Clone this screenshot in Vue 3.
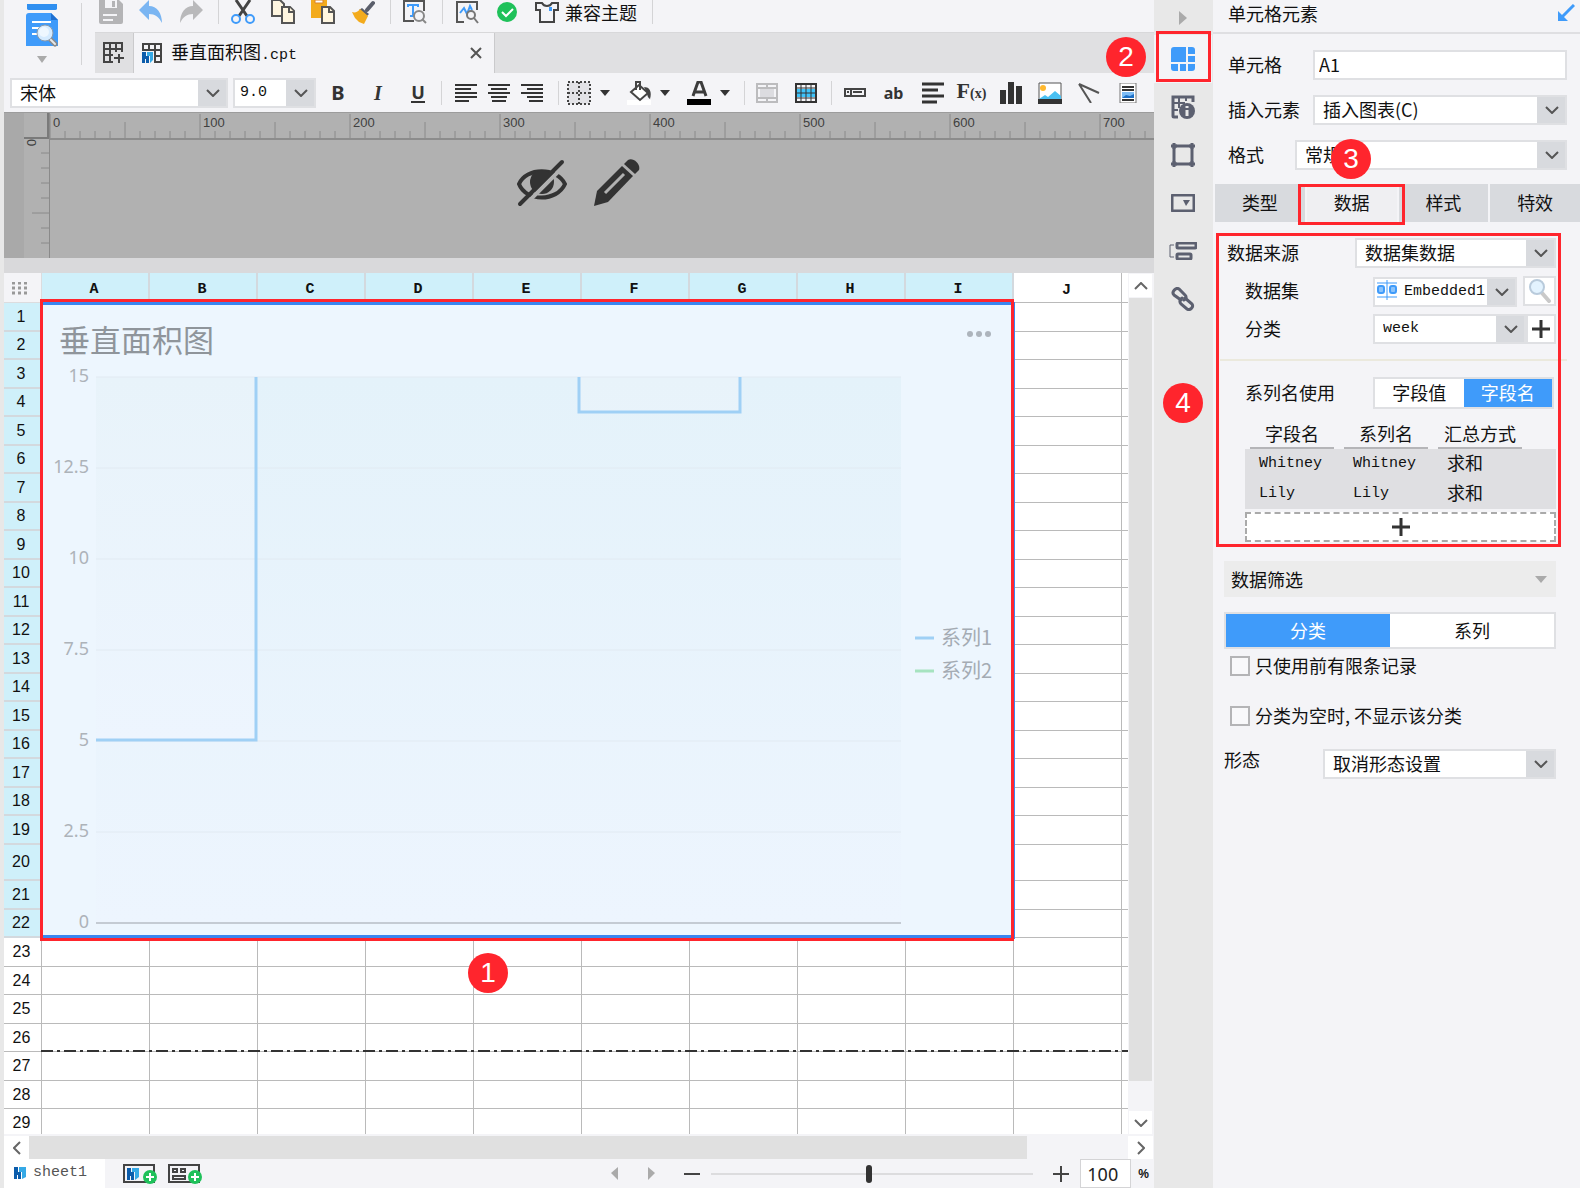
<script setup>
import { ref } from 'vue'

const fontName = ref('宋体')
const fontSize = ref('9.0')
const cellName = ref('A1')
const zoomLevel = ref(49)
const zoomPercent = ref('100')
const limitRecords = ref(false)
const hideEmpty = ref(false)

const columns = ['A', 'B', 'C', 'D', 'E', 'F', 'G', 'H', 'I', 'J']
const rows = Array.from({ length: 29 }, (_, i) => i + 1)

const horizontalTicks = Array.from({ length: 74 }, (_, i) => ({
  x: i * 15,
  top: i % 10 === 0 ? 1 : i % 5 === 0 ? 9 : 18,
  label: i % 10 === 0 ? String(i * 10) : ''
}))
const verticalTicks = [1, 2, 3, 4, 5, 6, 7].map(i => ({ y: i * 15, left: i % 5 === 0 ? 8 : 17 }))

const axis = ['15', '12.5', '10', '7.5', '5', '2.5', '0'].map((label, i) => ({ label, y: 75 + i * 91 }))

const propertyTabs = ['类型', '数据', '样式', '特效']
const series = [
  { field: 'Whitney', name: 'Whitney', method: '求和' },
  { field: 'Lily', name: 'Lily', method: '求和' }
]
</script>

<template>
  <div class="app">
    <main class="editor">
      <header class="top">
        <button class="preview" aria-label="预览">
          <svg width="32" height="44" viewBox="0 0 32 44">
            <path d="M1 0h30v5a2 2 0 0 1-2 1H3a2 2 0 0 1-2-1z" fill="#2f8ff0" />
            <path d="M3 9h22l7 7v26H0V12a3 3 0 0 1 3-3z" fill="#3f9bfa" />
            <path d="M25 9l7 7h-7z" fill="#1f6fd0" />
            <path d="M6 18h19M6 24h10M6 30h6" stroke="#fff" stroke-width="2" />
            <path d="M23 34l6 6" stroke="#8a8a8a" stroke-width="5" stroke-linecap="round" />
            <path d="M23 34l6 6" stroke="#e8e8e8" stroke-width="2" stroke-linecap="round" />
            <circle cx="19" cy="29" r="8" fill="#d5ebff" stroke="#8d9aa8" stroke-width="1" />
            <circle cx="18" cy="28" r="5" fill="#eef7ff" />
          </svg>
          <svg width="10" height="7" viewBox="0 0 10 7"><path d="M0 0h10L5 7z" fill="#aaa" /></svg>
        </button>

        <div class="top-right">
          <div class="toolbar">
            <button aria-label="保存">
              <svg viewBox="0 0 24 24"><path d="M0 0h20l4 4v18a2 2 0 0 1-2 2H2a2 2 0 0 1-2-2z" fill="#b4b4b6" /><path d="M6 0h12v8H6z" fill="#f4f4f7" /><path d="M13 1h3v6h-3z" fill="#b4b4b6" /><path d="M4 15h14M4 20h10" stroke="#f4f4f7" stroke-width="2" /></svg>
            </button>
            <button aria-label="撤销">
              <svg viewBox="0 0 24 24"><path d="M10 0v6c8 0 13 7 13 17-3-6-7-9-13-9v6L0 10z" fill="#7ab5f2" /></svg>
            </button>
            <button aria-label="重做">
              <svg viewBox="0 0 24 24"><path d="M14 0v6C6 6 1 13 1 23c3-6 7-9 13-9v6l10-10z" fill="#b9b9bb" /></svg>
            </button>
            <i class="sep"></i>
            <button aria-label="剪切">
              <svg viewBox="0 0 24 24" fill="none"><path d="M5 0l11 16M19 0L8 16" stroke="#444" stroke-width="3" /><circle cx="5" cy="19" r="4" stroke="#3f9bfa" stroke-width="2" /><circle cx="19" cy="19" r="4" stroke="#3f9bfa" stroke-width="2" /></svg>
            </button>
            <button aria-label="复制">
              <svg viewBox="0 0 24 24" fill="#fff6e0" stroke="#555" stroke-width="2"><path d="M1 0h8l4 4v12H1z" /><path d="M11 7h8l4 4v12H11z" /><path d="M18 7v5h5" /></svg>
            </button>
            <button aria-label="粘贴">
              <svg viewBox="0 0 24 24"><path d="M0 0h16v18H0z" fill="#f3ab1d" /><path d="M4 0h8v3H4z" fill="#fff" stroke="#d9822b" /><path d="M11 7h8l4 4v12H11z" fill="#fff6e0" stroke="#555" stroke-width="2" /><path d="M18 7v5h5" fill="none" stroke="#555" stroke-width="2" /></svg>
            </button>
            <button aria-label="格式刷">
              <svg viewBox="0 0 24 24"><path d="M22 3l-6 7" stroke="#5a5e6b" stroke-width="4" stroke-linecap="round" /><path d="M11 8l7 6-2 2-8-6z" fill="#5a5e6b" /><path d="M9 9l8 7-4 8-5-2-4-4-3-6c3 1 6 0 8-3z" fill="#f3ab1d" /></svg>
            </button>
            <i class="sep"></i>
            <button aria-label="文字查找">
              <svg viewBox="0 0 24 24" fill="none" stroke="#555" stroke-width="2"><path d="M11 21H1V1h20v10" /><path d="M5 7V5h10v2M10 5v11M7 16h6" stroke="#3f9bfa" /><circle cx="16" cy="16" r="5" fill="#f4f4f7" stroke="#888" /><path d="M19 19l4 4" stroke="#888" /></svg>
            </button>
            <i class="sep"></i>
            <button aria-label="图表检查">
              <svg viewBox="0 0 24 24" fill="none" stroke="#555" stroke-width="2"><path d="M9 22H2V2h20v8" /><path d="M5 13l4-5 3 6 3-8 2 4" stroke="#3f9bfa" /><circle cx="16" cy="15" r="4" fill="#f4f4f7" stroke="#777" /><path d="M19 18l4 5" stroke="#777" /></svg>
            </button>
            <button aria-label="校验">
              <svg viewBox="0 0 24 24"><circle cx="12" cy="12" r="10" fill="#1fc15a" /><path d="M7 12l4 4 7-7" fill="none" stroke="#fff" stroke-width="2" /></svg>
            </button>
            <button class="theme">
              <svg viewBox="0 0 24 24" fill="none"><path d="M1 3h6c2 4 8 4 10 0h6v7h-4v12H5V10H1z" stroke="#444" stroke-width="2" /><path d="M14 7h3v4h-3z" fill="#3f9bfa" /></svg>
              <span>兼容主题</span>
            </button>
            <i class="sep"></i>
          </div>

          <nav class="file-tabs">
            <button class="new-tab" aria-label="新建">
              <svg width="22" height="22" viewBox="0 0 22 22" fill="none" stroke="#444" stroke-width="2"><path d="M10 20H1V1h18v9M1 7h18M1 13h9M7 1v19M13 1v9" /><path d="M16 12v9M11 16h10" /></svg>
            </button>
            <div class="file-tab">
              <svg width="20" height="20" viewBox="0 0 20 20"><path d="M1 8V1h18v18h-7M1 7h18M13 1v18M7 1v6M13 13h6" fill="none" stroke="#444" stroke-width="2" /><path d="M0 9h4v4h3v7H4v-4H3v4H0z" fill="#0b5cab" /><path d="M5 9h6v8l-3 3v-7H5z" fill="#35a9e6" /></svg>
              <span class="file-name">垂直面积图<span class="mono">.cpt</span></span>
              <button class="close" aria-label="关闭">
                <svg width="12" height="12" viewBox="0 0 12 12"><path d="M1 1l10 10M11 1L1 11" stroke="#555" stroke-width="2" /></svg>
              </button>
            </div>
          </nav>
        </div>
      </header>

      <section class="format" aria-label="格式工具栏">
        <select v-model="fontName" class="select font-select" aria-label="字体"><option>宋体</option></select>
        <select v-model="fontSize" class="select size-select mono" aria-label="字号"><option>9.0</option></select>
        <div class="group style-group">
          <button aria-label="加粗"><b>B</b></button>
          <button aria-label="斜体"><b class="italic">I</b></button>
          <button aria-label="下划线"><b class="underline">U</b></button>
        </div>
        <div class="group align-group">
          <button aria-label="左对齐"><svg width="22" height="18" viewBox="0 0 22 18" stroke="#333" stroke-width="2"><path d="M0 1h22M0 5h16M0 9h22M0 13h22M0 17h14" /></svg></button>
          <button aria-label="居中"><svg width="22" height="18" viewBox="0 0 22 18" stroke="#333" stroke-width="2"><path d="M0 1h22M3 5h16M0 9h22M3 13h16M4 17h14" /></svg></button>
          <button aria-label="右对齐"><svg width="22" height="18" viewBox="0 0 22 18" stroke="#333" stroke-width="2"><path d="M0 1h22M6 5h16M0 9h22M6 13h16M8 17h14" /></svg></button>
        </div>
        <div class="group split-group">
          <button class="split" aria-label="边框">
            <svg width="24" height="24" viewBox="0 0 24 24"><path d="M1 1h22v22H1z" fill="#e2e2e6" stroke="#444" stroke-width="2" stroke-dasharray="2 2" /><path d="M12 1v22M1 12h22" stroke="#444" stroke-width="2" stroke-dasharray="2 2" /></svg>
            <svg class="caret" viewBox="0 0 10 6"><path d="M0 0h10L5 6z" /></svg>
          </button>
          <button class="split" aria-label="填充颜色">
            <svg width="24" height="24" viewBox="0 0 24 24"><path d="M0 19h24v5H0z" fill="#fff" /><path d="M12 4l9 8-8 7-9-8z" fill="#fff" stroke="#444" stroke-width="2" /><path d="M9 9V1h4v8" fill="none" stroke="#444" stroke-width="2" /><path d="M17 6c6 0 8 5 6 12-2-1-3-4-3-6z" fill="#444" /></svg>
            <svg class="caret" viewBox="0 0 10 6"><path d="M0 0h10L5 6z" /></svg>
          </button>
          <button class="split" aria-label="文字颜色">
            <svg width="24" height="24" viewBox="0 0 24 24"><path d="M0 18h24v6H0z" /><path d="M6 15l5-14h3l5 14M8 11h9" fill="none" stroke="#3c3c3c" stroke-width="3" /></svg>
            <svg class="caret" viewBox="0 0 10 6"><path d="M0 0h10L5 6z" /></svg>
          </button>
        </div>
        <div class="group merge-group">
          <button aria-label="合并单元格"><svg width="22" height="20" viewBox="0 0 22 20"><path d="M1 1h20v18H1zM1 5h20M1 15h20M11 1v4M11 15v4" fill="none" stroke="#bcbcbe" stroke-width="2" /><path d="M4 6h14v8H4z" fill="#dcdce0" /></svg></button>
          <button aria-label="表格"><svg width="22" height="20" viewBox="0 0 22 20"><path d="M1 6h20v8H1z" fill="#3fc4fa" /><path d="M1 1h20v18H1z" fill="none" stroke="#333" stroke-width="2" /><path d="M1 5h20M1 10h20M1 15h20M6 1v18M11 1v18M16 1v18" fill="none" stroke="#333" stroke-width="1" /></svg></button>
        </div>
        <div class="group insert-group">
          <button aria-label="控件"><svg width="22" height="9" viewBox="0 0 22 9"><path d="M1 1h20v7H1zM7 1v7M9 4h9M3 4h2" fill="none" stroke="#444" stroke-width="2" /></svg></button>
          <button aria-label="文本"><b class="small-ab">ab</b></button>
          <button aria-label="富文本"><svg width="22" height="22" viewBox="0 0 22 22" stroke="#333" stroke-width="3"><path d="M0 2h22M0 8h16M0 14h22M0 20h15" /></svg></button>
          <button aria-label="公式"><span class="fx">F<small>(x)</small></span></button>
          <button aria-label="图表"><svg width="22" height="22" viewBox="0 0 22 22" fill="#333"><path d="M0 8h6v14H0zM8 0h6v22H8zM16 4h6v18h-6z" /></svg></button>
          <button aria-label="图片"><svg width="24" height="22" viewBox="0 0 24 22"><path d="M1 1h22v20H1z" fill="#fff" stroke="#555" stroke-width="1" /><circle cx="5" cy="6" r="3" fill="#ffb82e" /><path d="M1 17l6-4 3 2 7-6 6 5v4H1z" fill="#49c0f2" /><path d="M0 17h24v5H0z" fill="#333" /></svg></button>
          <button aria-label="斜线"><svg width="22" height="20" viewBox="0 0 22 20" fill="none" stroke="#555" stroke-width="2"><path d="M1 1l12 19M1 1l20 9" /></svg></button>
          <button aria-label="子报表"><svg width="18" height="20" viewBox="0 0 18 20"><path d="M1 0h16v20H1z" fill="#fff" stroke="#777" /><path d="M3 4h12M3 7h12M3 17h12" stroke="#333" stroke-width="2" /><path d="M3 9h12v6H3z" fill="#7dbcf5" /><path d="M3 15l4-3 4 1 4-2v4z" fill="#1c6ec4" /></svg></button>
        </div>
      </section>

      <section class="canvas-head" aria-label="参数面板">
        <div class="gutter">
          <svg width="25" height="145" viewBox="0 0 25 145">
            <path d="M0 25h25M24 0v25" stroke="#7a7a7a" stroke-width="2" />
            <path v-for="t in verticalTicks" :key="t.y" :d="`M${t.left} ${25 + t.y}H25`" stroke="#8a8a8a" />
            <text class="ruler-text" transform="translate(3 26) rotate(90)">0</text>
          </svg>
        </div>
        <div class="canvas-body">
          <svg class="ruler" height="27">
            <g v-for="t in horizontalTicks" :key="t.x">
              <path :d="`M${t.x} ${t.top}V25`" stroke="#8a8a8a" />
              <text v-if="t.label" class="ruler-text" :x="t.x + 3" y="14">{{ t.label }}</text>
            </g>
            <path d="M0 26H3000" stroke="#8c8c8c" stroke-width="2" />
          </svg>
          <div class="canvas-actions">
            <button aria-label="隐藏">
              <svg width="50" height="48" viewBox="0 0 50 48">
                <path d="M2 25C9 8 40 8 48 25 40 43 9 43 2 25z" fill="none" stroke="#333" stroke-width="4" />
                <circle cx="25" cy="23" r="12" fill="#333" />
                <path d="M6 48L50 4" stroke="#b1b1b1" stroke-width="4" />
                <path d="M3 45L45 3" stroke="#333" stroke-width="4" stroke-linecap="round" />
              </svg>
            </button>
            <button aria-label="编辑">
              <svg width="46" height="48" viewBox="0 0 46 48">
                <path d="M0 47l3-15L28 7l11 10-25 26z" fill="#333" />
                <path d="M11 34l19-19" stroke="#b1b1b1" stroke-width="3" />
                <path d="M30 5l4-4c5-3 13 4 11 10l-4 4z" fill="#333" />
              </svg>
            </button>
          </div>
        </div>
      </section>
      <div class="splitter"></div>

      <section class="sheet-area">
        <div class="sheet">
          <table>
            <colgroup>
              <col class="col-head"><col v-for="c in columns" :key="c" class="col-cell"><col>
            </colgroup>
            <thead>
              <tr>
                <th class="corner" aria-label="全选">
                  <svg width="16" height="13" viewBox="0 0 16 13"><path d="M1 1h16M1 6h16M1 11h16" stroke="#999" stroke-width="3" stroke-dasharray="3 3" /></svg>
                </th>
                <th v-for="c in columns" :key="c" :class="{ picked: c !== 'J' }">{{ c }}</th>
                <th></th>
              </tr>
            </thead>
            <tbody>
              <tr v-for="r in rows" :key="r" :class="{ tall: r === 20 }">
                <th :class="{ picked: r <= 22 }">{{ r }}</th>
                <td v-for="c in columns" :key="c"></td>
                <td class="edge"></td>
              </tr>
            </tbody>
          </table>

          <svg class="page-break" height="2"><path d="M0 1H3000" stroke="#333" stroke-width="2" stroke-dasharray="12 4 3 4" /></svg>

          <div class="chart">
            <svg width="974" height="637" viewBox="0 0 974 637">
              <defs>
                <linearGradient id="area" gradientUnits="userSpaceOnUse" x1="0" y1="75" x2="0" y2="621">
                  <stop offset="0" stop-color="#e4f2fa" />
                  <stop offset="1" stop-color="#edf5fe" />
                </linearGradient>
                <linearGradient id="back" gradientUnits="userSpaceOnUse" x1="0" y1="75" x2="0" y2="438">
                  <stop offset="0" stop-color="#e8f3fa" />
                  <stop offset="1" stop-color="#edf5fe" />
                </linearGradient>
              </defs>
              <path d="M55 75H860V438H55z" fill="url(#back)" />
              <path d="M55 438H215V75H538V110H699V75H860V621H55z" fill="url(#area)" />
              <path v-for="a in axis" :key="a.label" :d="`M55 ${a.y}H860`" :stroke="a.label === '0' ? '#c4cbd3' : '#e1eaf2'" :stroke-width="a.label === '0' ? 2 : 1" />
              <path d="M55 438H215V75M538 75V110H699V75" fill="none" stroke="#9fd0f5" stroke-width="3" />
              <text v-for="a in axis" :key="a.y" class="axis-text" x="48" :y="a.y + 5">{{ a.label }}</text>
              <text class="chart-title" x="18" y="50">垂直面积图</text>
              <g fill="#adb4bc"><circle cx="929" cy="32" r="3" /><circle cx="938" cy="32" r="3" /><circle cx="947" cy="32" r="3" /></g>
              <path d="M874 336h19" stroke="#9fd0f5" stroke-width="3" />
              <path d="M874 369h19" stroke="#a6e3c0" stroke-width="3" />
              <text class="legend-text" x="900" y="343">系列1</text>
              <text class="legend-text" x="900" y="376">系列2</text>
            </svg>
          </div>
          <div class="mark chart-mark"></div>
          <span class="badge badge-1">1</span>
        </div>

        <div class="vbar">
          <button aria-label="向上"><svg width="14" height="8" viewBox="0 0 14 8"><path d="M1 7l6-6 6 6" /></svg></button>
          <div class="thumb"></div>
          <button aria-label="向下"><svg width="14" height="8" viewBox="0 0 14 8"><path d="M1 1l6 6 6-6" /></svg></button>
        </div>
      </section>

      <div class="hbar">
        <button aria-label="向左"><svg width="8" height="14" viewBox="0 0 8 14"><path d="M7 1L1 7l6 6" /></svg></button>
        <div class="thumb"></div>
        <button aria-label="向右"><svg width="8" height="14" viewBox="0 0 8 14"><path d="M1 1l6 6-6 6" /></svg></button>
      </div>

      <footer class="status">
        <button class="sheet-tab">
          <svg width="12" height="12" viewBox="0 0 12 12"><path d="M0 0h4v5h3v7H4V8H3v4H0z" fill="#0b5cab" /><path d="M5 0h7v10l-4 2V5H5z" fill="#35a9e6" /></svg>
          <span class="mono">sheet1</span>
        </button>
        <button aria-label="新增报表">
          <svg width="34" height="20" viewBox="0 0 34 20"><path d="M1 1h30v17H1z" fill="none" stroke="#444" stroke-width="2" /><path d="M4 4h4v4h3v8H8v-4H7v4H4z" fill="#0b5cab" /><path d="M9 4h7v9l-4 3V8H9z" fill="#35a9e6" /><circle cx="27" cy="13" r="7" fill="#1fc15a" /><path d="M27 9v8M23 13h8" stroke="#fff" stroke-width="2" /></svg>
        </button>
        <button aria-label="新增聚合报表">
          <svg width="34" height="20" viewBox="0 0 34 20"><path d="M1 1h30v17H1zM5 5h4v3H5zM13 5h4v3h-4zM5 12h12v3H5z" fill="none" stroke="#444" stroke-width="2" /><circle cx="27" cy="13" r="7" fill="#1fc15a" /><path d="M27 9v8M23 13h8" stroke="#fff" stroke-width="2" /></svg>
        </button>
        <div class="zoom">
          <button aria-label="上一页"><svg width="7" height="13" viewBox="0 0 7 13"><path d="M7 0v13L0 6z" fill="#aaa" /></svg></button>
          <button class="next" aria-label="下一页"><svg width="7" height="13" viewBox="0 0 7 13"><path d="M0 0v13l7-7z" fill="#aaa" /></svg></button>
          <button aria-label="缩小"><svg width="16" height="16" viewBox="0 0 16 16"><path d="M0 8h16" stroke="#444" stroke-width="2" /></svg></button>
          <input v-model="zoomLevel" class="slider" type="range" min="0" max="100" aria-label="缩放">
          <button aria-label="放大"><svg width="16" height="16" viewBox="0 0 16 16"><path d="M0 8h16M8 0v16" stroke="#444" stroke-width="2" /></svg></button>
          <label class="percent"><input v-model="zoomPercent" type="text" aria-label="缩放比例"><b>%</b></label>
        </div>
      </footer>
    </main>

    <nav class="strip" aria-label="属性面板">
      <button class="collapse" aria-label="收起"><svg width="8" height="14" viewBox="0 0 8 14"><path d="M0 0v14l8-7z" fill="#aaa" /></svg></button>
      <button class="active" aria-label="单元格元素">
        <svg width="24" height="24" viewBox="0 0 24 24" fill="#3f9bfa"><path d="M3 0h12v15H0V3a3 3 0 0 1 3-3zM17 0h4a3 3 0 0 1 3 3v4h-7zM17 9h7v6h-7zM0 17h7v7H3a3 3 0 0 1-3-3zM9 17h6v7H9zM17 17h7v4a3 3 0 0 1-3 3h-4z" /></svg>
      </button>
      <button aria-label="单元格属性">
        <svg width="24" height="24" viewBox="0 0 24 24" fill="none" stroke="#5c6070"><path d="M7 22H3a1 1 0 0 1-1-1V2h20v5" stroke-width="3" /><path d="M2 8h12M2 15h5M8 2v11M15 2v4" stroke-width="2" /><circle cx="16" cy="16" r="8" fill="#5c6070" stroke="none" /><path d="M16 11v2M16 15v6" stroke="#e8e8e8" stroke-width="3" /></svg>
      </button>
      <button aria-label="悬浮元素">
        <svg width="24" height="24" viewBox="0 0 24 24" fill="none" stroke="#5c6070"><path d="M3 3h18v18H3z" stroke-width="3" /><path d="M3 0v6M0 3h6M18 3h6M21 0v6M3 18v6M0 21h6M21 18v6M18 21h6" stroke-width="3" /></svg>
      </button>
      <button aria-label="控件设置">
        <svg width="24" height="18" viewBox="0 0 24 18"><rect x="1" y="1" width="22" height="16" rx="1" fill="none" stroke="#5c6070" stroke-width="3" /><path d="M12 6h7l-4 6z" fill="#5c6070" /></svg>
      </button>
      <button aria-label="条件属性">
        <svg width="28" height="18" viewBox="0 0 28 18" fill="none" stroke="#5c6070"><path d="M5 3H1v12h4" stroke-width="1" /><rect x="8" y="1" width="19" height="5" rx="1" stroke-width="3" /><rect x="8" y="12" width="14" height="5" rx="1" stroke-width="3" /></svg>
      </button>
      <button aria-label="超级链接">
        <svg width="24" height="24" viewBox="0 0 24 24" fill="none" stroke="#5c6070" stroke-width="3" stroke-linecap="round"><path d="M10 13L3 8C0 5 5 0 8 2l6 6c2 2 1 4-1 5" /><path d="M14 11l7 6c2 3-2 7-5 5l-6-5c-2-2-1-5 1-6" /></svg>
      </button>
      <div class="mark strip-mark"></div>
      <span class="badge badge-2">2</span>
      <span class="badge badge-4">4</span>
    </nav>

    <aside class="props">
      <header class="props-title">
        <span>单元格元素</span>
        <button aria-label="停靠"><svg width="18" height="18" viewBox="0 0 18 18"><path d="M17 1L5 13" stroke="#3f9bfa" stroke-width="3" /><path d="M1 7l10 10H1z" fill="#3f9bfa" /></svg></button>
      </header>

      <div class="basic">
        <div class="row wide"><label for="cell">单元格</label><input id="cell" v-model="cellName" class="box" type="text"></div>
        <div class="row wide"><label for="insert">插入元素</label><select id="insert" class="select"><option>插入图表(C)</option></select></div>
        <div class="row narrow"><label for="fmt">格式</label><select id="fmt" class="select"><option>常规</option></select></div>
        <span class="badge badge-3">3</span>
      </div>

      <div class="prop-tabs">
        <button v-for="t in propertyTabs" :key="t" :class="{ current: t === '数据' }">{{ t }}</button>
        <div class="mark tab-mark"></div>
      </div>

      <section class="data">
        <div class="row source"><label for="source">数据来源</label><select id="source" class="select"><option>数据集数据</option></select></div>
        <div class="row inset">
          <label for="dataset">数据集</label>
          <div class="dataset">
            <select id="dataset" class="select mono with-icon"><option>Embedded1</option></select>
            <svg width="20" height="20" viewBox="0 0 20 20" fill="#8cc4fb" stroke="#3f9bfa"><path d="M0 3h20M0 17h20M10 0v20" stroke-width="1" /><rect x="1" y="6" width="6" height="7" rx="2" stroke-width="2" /><rect x="13" y="6" width="6" height="7" rx="2" stroke-width="2" /></svg>
          </div>
          <button class="box search" aria-label="预览数据集">
            <svg width="22" height="24" viewBox="0 0 22 24"><path d="M13 14l7 8" stroke="#c9c9c9" stroke-width="4" stroke-linecap="round" /><circle cx="8" cy="8" r="7" fill="#e3f3ff" stroke="#b9cbdc" stroke-width="2" /></svg>
          </button>
        </div>
        <div class="row inset">
          <label for="category">分类</label>
          <select id="category" class="select mono category"><option>week</option></select>
          <button class="box plus" aria-label="添加分类"><svg width="18" height="18" viewBox="0 0 18 18"><path d="M0 9h18M9 0v18" stroke="#333" stroke-width="3" /></svg></button>
        </div>
        <hr>
        <div class="row inset series-mode">
          <span>系列名使用</span>
          <div class="toggle"><button>字段值</button><button class="on">字段名</button></div>
        </div>
        <table class="series">
          <thead><tr><th><span>字段名</span></th><th><span>系列名</span></th><th><span>汇总方式</span></th></tr></thead>
          <tbody>
            <tr v-for="s in series" :key="s.field"><td class="mono">{{ s.field }}</td><td class="mono">{{ s.name }}</td><td class="method">{{ s.method }}</td></tr>
          </tbody>
        </table>
        <button class="add-series" aria-label="添加系列"><svg width="18" height="18" viewBox="0 0 18 18"><path d="M0 9h18M9 0v18" stroke="#333" stroke-width="3" /></svg></button>
        <div class="mark data-mark"></div>
      </section>

      <section class="filter">
        <button class="filter-head"><span>数据筛选</span><svg width="12" height="7" viewBox="0 0 12 7"><path d="M0 0h12L6 7z" fill="#aaa" /></svg></button>
        <div class="toggle"><button class="on">分类</button><button>系列</button></div>
        <label class="check"><input v-model="limitRecords" type="checkbox"><span>只使用前有限条记录</span></label>
        <label class="check"><input v-model="hideEmpty" type="checkbox"><span>分类为空时<span class="comma">,</span>不显示该分类</span></label>
        <div class="row shape"><label for="shape">形态</label><select id="shape" class="select"><option>取消形态设置</option></select></div>
      </section>
    </aside>
  </div>
</template>

<style>
body {
  margin: 0;
  background: #f4f4f7;
}
</style>

<style scoped>
.app {
  display: flex;
  min-height: 100vh;
  padding-left: 4px;
  overflow: hidden;
  background: #e8e8e8;
  color: #111;
  font: 18px/24px "Noto Sans CJK SC", sans-serif;
}
.app * {
  box-sizing: border-box;
}
button {
  display: flex;
  align-items: center;
  justify-content: center;
  padding: 0;
  border: 0;
  background: none;
  color: inherit;
  font: inherit;
}
svg {
  display: block;
  flex: none;
}
.mono {
  font-family: "Liberation Mono", "Noto Sans CJK SC", monospace;
  font-size: 15px;
}
.editor {
  display: flex;
  flex: 1;
  flex-direction: column;
  min-width: 0;
  background: #f4f4f7;
}

/* shared fields */
.box,
.select {
  height: 30px;
  min-width: 0;
  border: 2px solid #dfe0e3;
  border-radius: 0;
  outline: 0;
  background-color: #fff;
  color: #111;
  font-size: 18px;
  line-height: 24px;
  font-family: "Noto Sans CJK SC", sans-serif;
}
input.box {
  padding: 0 4px 2px;
}
.select {
  appearance: none;
  padding: 0 30px 2px 8px;
  background-image:
    url("data:image/svg+xml,%3Csvg xmlns='http://www.w3.org/2000/svg' width='29' height='8'%3E%3Cpath d='M10 1l6 6 6-6' fill='none' stroke='%23555' stroke-width='2'/%3E%3C/svg%3E"),
    linear-gradient(#d8dade, #d8dade);
  background-position: right center, right center;
  background-repeat: no-repeat;
  background-size: 29px 8px, 28px 100%;
}
.select.mono {
  padding-bottom: 0;
  font-family: "Liberation Mono", monospace;
  font-size: 15px;
}

/* top toolbar */
.top {
  display: flex;
  height: 73px;
}
.preview {
  flex-direction: column;
  justify-content: flex-start;
  gap: 8px;
  width: 78px;
  height: 62px;
  margin: 3px 13px 0 0;
  padding: 1px 2px 0 0;
  border-right: 1px solid #d4d4d6;
}
.top-right {
  flex: 1;
  min-width: 0;
}
.toolbar {
  display: flex;
  height: 32px;
}
.toolbar button {
  height: 24px;
  margin: 0 8px 0 8px;
}
.toolbar button:first-child {
  margin-left: 4px;
}
.toolbar button svg {
  width: 24px;
  height: 24px;
}
.toolbar .theme {
  gap: 6px;
  margin-right: 10px;
}
.sep {
  width: 1px;
  height: 24px;
  margin: 0 4px 0 7px;
  background: #d4d4d6;
}
.toolbar .theme + .sep {
  margin-left: 5px;
}
.file-tabs {
  display: flex;
  height: 41px;
  border-top: 1px solid #d8d8da;
  background: #e0e0e2;
}
.new-tab {
  width: 39px;
  border-right: 1px solid #cacacc;
}
.file-tab {
  display: flex;
  align-items: center;
  width: 361px;
  padding: 0 12px 0 8px;
  border-right: 1px solid #cacacc;
  background: #f4f4f7;
}
.file-name {
  flex: 1;
  margin-left: 9px;
}

/* format toolbar */
.format {
  display: flex;
  align-items: center;
  height: 39px;
  padding-left: 6px;
}
.font-select {
  width: 218px;
}
.size-select {
  width: 83px;
  margin-left: 5px;
  padding-left: 5px;
}
.group {
  display: flex;
  flex: none;
  align-items: center;
  height: 24px;
  color: #333;
}
.group + .group {
  border-left: 1px solid #d4d4d6;
}
.style-group {
  padding: 0 3px 0 2px;
}
.style-group button {
  width: 40px;
}
.style-group b {
  font: bold 20px/22px "Noto Sans", sans-serif;
}
.style-group .italic {
  font-family: "Liberation Serif", serif;
  font-style: italic;
}
.style-group .underline {
  font-size: 18px;
  line-height: 18px;
  border-bottom: 2px solid #333;
}
.align-group {
  padding: 0 10px 0 7px;
}
.align-group button {
  width: 33px;
}
.split-group {
  gap: 17px;
  padding: 0 14px 0 8px;
}
.split {
  gap: 9px;
}
.caret {
  width: 10px;
  height: 6px;
  fill: #333;
}
.merge-group {
  padding: 0 6px 0 2px;
}
.merge-group button,
.insert-group button {
  width: 39px;
}
.insert-group {
  padding-left: 3px;
}
.small-ab {
  font: bold 16px/20px "Noto Sans", sans-serif;
}
.fx {
  font: bold 22px/22px "Liberation Serif", serif;
}
.fx small {
  font-size: 14px;
}

/* rulers */
.canvas-head {
  display: flex;
  height: 146px;
  background: #b1b1b1;
  border-top: 1px solid #9c9c9c;
}
.gutter {
  width: 45px;
  padding-left: 20px;
  background: linear-gradient(90deg, #a9a9a9 20px, #b1b1b1 20px);
}
.canvas-body {
  flex: 1;
  min-width: 0;
  border-left: 1px solid #8a8a8a;
}
.ruler {
  width: 100%;
}
.ruler-text {
  fill: #404040;
  font: 13px "Liberation Sans", sans-serif;
}
.canvas-actions {
  display: flex;
  justify-content: center;
  gap: 27px;
  padding: 19px 48px 0 0;
}
.splitter {
  height: 15px;
  background: #d9d9db;
}

/* spreadsheet */
.sheet-area {
  display: flex;
  height: 861px;
}
.sheet {
  position: relative;
  flex: 1;
  min-width: 0;
  overflow: hidden;
  background: #fff;
}
.sheet table {
  width: 100%;
  min-width: 1124px;
  border-spacing: 0;
  table-layout: fixed;
}
.col-head {
  width: 38px;
}
.col-cell {
  width: 108px;
}
.sheet th,
.sheet td {
  padding: 0;
  border: solid #bababa;
  border-width: 0 1px 1px 0;
}
.sheet td.edge,
.sheet thead th:last-child {
  border-right: 0;
}
.sheet thead tr {
  height: 30px;
}
.sheet thead th {
  padding: 6px 2px 0 0;
  font: bold 15px/22px "Liberation Mono", monospace;
}
.sheet thead th.corner {
  padding: 2px 0 0 7px;
  border-color: #dcdcde;
  background: #f4f4f7;
}
.sheet th.picked {
  border-color: #d3d9de;
  border-width: 0 2px 2px 0;
  background: #cff0fa;
}
.sheet tbody tr {
  height: 28px;
}
.sheet tbody tr:nth-child(odd) {
  height: 29px;
}
.sheet tbody tr.tall {
  height: 36px;
}
.sheet tbody th {
  padding-right: 2px;
  font: 16px/20px "Liberation Sans", sans-serif;
}
.page-break {
  position: absolute;
  top: 777px;
  left: 37px;
  width: 100%;
}
.chart {
  position: absolute;
  top: 29px;
  left: 37px;
  width: 974px;
  height: 637px;
  background: #edf6fe;
}
.chart::after {
  position: absolute;
  inset: 0;
  border: solid #3a86f0;
  border-width: 3px 2px 4px 0;
  content: "";
}
.chart-title {
  fill: #8f959b;
  font-size: 31px;
}
.axis-text {
  fill: #adb3b9;
  font: 18px "Noto Sans", sans-serif;
  text-anchor: end;
}
.legend-text {
  fill: #a4abb3;
  font-size: 20px;
}

/* scroll bars */
.vbar,
.hbar {
  display: flex;
  background: #f4f4f7;
}
.vbar path,
.hbar path {
  fill: none;
  stroke: #666;
  stroke-width: 2;
}
.vbar {
  flex-direction: column;
  width: 26px;
  padding: 1px 2px 0 1px;
}
.vbar button {
  height: 23px;
  background: #fff;
}
.vbar .thumb {
  flex: 1;
  margin: 1px 0 30px;
  background: #e0e0e0;
}
.hbar {
  height: 25px;
  padding: 2px 1px 0 0;
}
.hbar button {
  width: 25px;
  background: #fff;
}
.hbar .thumb {
  flex: 1;
  margin-right: 101px;
  background: #e0e0e0;
}

/* status bar */
.status {
  display: flex;
  gap: 11px;
  height: 29px;
}
.sheet-tab {
  gap: 7px;
  width: 101px;
  margin-right: 7px;
  padding: 0 8px 2px 0;
  background: #fff;
  color: #555;
}
.zoom {
  display: flex;
  align-items: center;
  margin-left: auto;
}
.zoom .next {
  margin: 0 29px 0 30px;
}
.slider {
  width: 322px;
  height: 20px;
  margin: 0 20px 0 11px;
  appearance: none;
  background: linear-gradient(#dcdcde, #dcdcde) center / 100% 2px no-repeat;
}
.slider::-webkit-slider-thumb {
  width: 6px;
  height: 18px;
  border-radius: 3px;
  appearance: none;
  background: #333;
}
.percent {
  display: flex;
  align-items: center;
  gap: 7px;
  margin: 0 5px 0 11px;
}
.percent input {
  width: 51px;
  height: 29px;
  padding: 0 6px;
  border: 1px solid #d4d4d6;
  border-radius: 0;
  color: #222;
  font: 18px "Noto Sans", sans-serif;
}
.percent b {
  font: bold 12px/20px "Liberation Sans", sans-serif;
}

/* icon strip */
.strip {
  position: relative;
  flex: none;
  width: 59px;
}
.strip button {
  width: 58px;
  height: 48px;
}
.strip .collapse {
  height: 35px;
}
.strip .active {
  background: #f4f4f7;
}

/* property panel */
.props {
  flex: none;
  width: 367px;
  background: #f4f4f7;
}
.props-title {
  display: flex;
  align-items: flex-start;
  justify-content: space-between;
  height: 34px;
  padding: 1px 5px 0 15px;
  border-bottom: 2px solid #dfdfe2;
}
.props-title button {
  height: 24px;
}
.basic {
  position: relative;
  display: flex;
  flex-direction: column;
  gap: 15px;
  padding: 16px 13px 0 15px;
}
.row {
  display: flex;
  align-items: center;
  height: 30px;
}
.row > label,
.row > span {
  padding-bottom: 2px;
}
.row > .select,
.row > input {
  flex: 1;
}
.wide label {
  width: 85px;
}
.narrow label {
  width: 67px;
}
.prop-tabs {
  position: relative;
  display: flex;
  gap: 2px;
  height: 38px;
  margin: 14px 0 0 2px;
}
.prop-tabs button {
  flex: 1;
  padding-bottom: 2px;
  background: #d8dade;
}
.prop-tabs .current {
  background: #efeff2;
}
.data {
  position: relative;
  display: flow-root;
  margin-top: 16px;
  padding: 0 24px 0 14px;
}
.source label {
  width: 128px;
}
.inset {
  margin-top: 8px;
  padding-left: 18px;
}
.inset > label,
.inset > span {
  width: 128px;
}
.dataset {
  position: relative;
  flex: 1;
  min-width: 0;
}
.dataset .select {
  width: 100%;
  padding-left: 29px;
}
.dataset svg {
  position: absolute;
  top: 5px;
  left: 4px;
}
.search {
  width: 33px;
  margin-left: 6px;
}
.plus {
  width: 30px;
}
hr {
  height: 2px;
  margin: 15px -11px 0 -7px;
  border: 0;
  background: #ebe9dd;
}
.series-mode {
  height: 32px;
  margin-top: 16px;
  padding-right: 2px;
}
.toggle {
  display: flex;
  flex: 1;
  height: 100%;
  border: 2px solid #dfe0e3;
  background: #fff;
}
.toggle button {
  flex: 1;
  padding-bottom: 2px;
}
.toggle .on {
  background: #3f9bfa;
  color: #fff;
}
.series {
  width: 311px;
  margin: 11px 0 0 18px;
  border-spacing: 0;
  table-layout: fixed;
}
.series th {
  width: 94px;
  padding: 0 5px;
  font-weight: 400;
  text-align: center;
}
.series th:last-child {
  width: auto;
  padding-right: 34px;
}
.series th span {
  display: block;
  height: 29px;
  border-bottom: 2px solid #b5b5b8;
  line-height: 26px;
}
.series td {
  height: 30px;
  padding: 0 0 0 14px;
  background: #dfdfe2;
}
.series td.method {
  padding-bottom: 4px;
}
.add-series {
  width: 311px;
  height: 30px;
  margin: 3px 0 0 18px;
  border: 2px dashed #aaa;
  background: #fff;
}
.filter {
  display: flex;
  flex-direction: column;
  padding: 19px 24px 0 11px;
}
.filter-head {
  justify-content: space-between;
  height: 36px;
  padding: 0 9px 0 7px;
  background: #ececec;
}
.filter .toggle {
  flex: none;
  height: 37px;
  margin-top: 15px;
}
.check {
  display: flex;
  align-items: center;
  gap: 5px;
  height: 30px;
  margin: 2px 0 18px 6px;
}
.check > span {
  padding-bottom: 2px;
}
.check input {
  width: 20px;
  height: 20px;
  margin: 0;
  border: 2px solid #b4b4b6;
  appearance: none;
  background: #f8f8fa;
}
.comma {
  display: inline-block;
  width: 9px;
}
.shape label {
  width: 99px;
  padding-bottom: 10px;
}

/* numbered callouts */
.mark {
  position: absolute;
  border: 3px solid #ff252d;
  pointer-events: none;
}
.badge {
  position: absolute;
  z-index: 2;
  width: 40px;
  height: 40px;
  border-radius: 50%;
  background: #ff252d;
  color: #fff;
  font: 28px/40px "Liberation Sans", sans-serif;
  text-align: center;
}
.chart-mark {
  top: 26px;
  left: 36px;
  width: 974px;
  height: 642px;
}
.badge-1 {
  top: 680px;
  left: 464px;
}
.strip-mark {
  top: 31px;
  left: 2px;
  width: 55px;
  height: 51px;
}
.badge-2 {
  top: 37px;
  left: -48px;
}
.badge-4 {
  top: 383px;
  left: 9px;
}
.badge-3 {
  top: 105px;
  left: 118px;
}
.tab-mark {
  top: 0;
  left: 83px;
  width: 107px;
  height: 41px;
}
.data-mark {
  top: -5px;
  left: 3px;
  width: 345px;
  height: 314px;
}
</style>
